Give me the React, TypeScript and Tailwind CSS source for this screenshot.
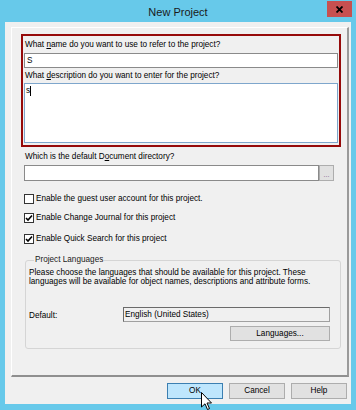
import React from 'react';

const CheckRow = ({ label, checked }: { label: string; checked: boolean }) => (
  <div className="flex items-center h-[10px]">
    <div className="w-[10px] h-[10px] border border-[#333333] bg-white flex items-center justify-center">
      {checked && (
        <svg width="8" height="8" viewBox="0 0 8 8">
          <path d="M1 4 L3 6 L7 1.5" fill="none" stroke="#000" strokeWidth="1.6" />
        </svg>
      )}
    </div>
    <span className="ml-[2px]">{label}</span>
  </div>
);

const Btn = ({ children, primary, className = '' }: { children: React.ReactNode; primary?: boolean; className?: string }) => (
  <div
    className={`flex items-center justify-center border ${
      primary ? 'bg-[#bee6fd] border-[#3c7fb1]' : 'bg-[#e1e1e1] border-[#adadad]'
    } ${className}`}
  >
    {children}
  </div>
);

export default function App() {
  return (
    <div className="relative w-[356px] h-[410px] overflow-hidden bg-[#67c9ea] flex flex-col font-['Liberation_Sans',Arial,sans-serif] text-[8.2px] leading-[10px] text-black">
      {/* Title bar */}
      <div className="relative h-[22px] flex items-center justify-center pt-[2px]">
        <span className="text-[11px] leading-[14px] text-[#1a1a1a]">New Project</span>
        <div className="absolute right-[4px] top-[1px] w-[25px] h-[16px] bg-[#c75050] flex items-center justify-center">
          <svg width="7" height="7" viewBox="0 0 7 7">
            <path d="M0.5 0.5 L6.5 6.5 M6.5 0.5 L0.5 6.5" stroke="#000" strokeWidth="1.8" />
          </svg>
        </div>
      </div>

      {/* Client area */}
      <div className="mx-[5px] w-[346px] h-[382px] bg-[#f0f0f0] pl-[6px] pr-[2px] pt-[5px] flex flex-col">
        {/* Page */}
        <div className="w-[338px] h-[350px] border-t border-l border-t-white border-l-white border-r-2 border-b-2 border-r-[#9a9a9a] border-b-[#8f8f8f] pl-[9px] pt-[6px] flex flex-col">
          {/* Highlighted required fields */}
          <div className="w-[320px] border-2 border-[#960a0a] px-[1px] pb-[2px] flex flex-col">
            <div className="mt-[4px] pl-[1px]">
              What <u>n</u>ame do you want to use to refer to the project?
            </div>
            <div className="mt-[3px] h-[15px] bg-white border border-[#8a8a8a] pl-[2px] flex items-center">S</div>
            <div className="mt-[3px] pl-[1px]">
              What <u>d</u>escription do you want to enter for the project?
            </div>
            <div className="mt-[2px] h-[60px] bg-white border border-[#7ea6cc] pl-[1px] pt-[2px] flex items-start">
              <span>s</span>
              <span className="w-px h-[10px] bg-black" />
            </div>
          </div>

          <div className="pl-[3px] flex flex-col">
            <div className="mt-[5px] pl-[1px]">
              Which is the default D<u>o</u>cument directory?
            </div>
            <div className="mt-[3px] flex">
              <div className="w-[295px] h-[16px] bg-white border border-[#8a8a8a]" />
              <div className="w-[15px] h-[16px] bg-[#e1e1e1] border border-[#adadad] flex items-center justify-center text-[7px] text-[#7a5a8a] leading-[8px] pt-[3px]">
                ...
              </div>
            </div>

            <div className="mt-[13px]">
              <CheckRow label="Enable the guest user account for this project." checked={false} />
            </div>
            <div className="mt-[9px]">
              <CheckRow label="Enable Change Journal for this project" checked />
            </div>
            <div className="mt-[11px]">
              <CheckRow label="Enable Quick Search for this project" checked />
            </div>

            <fieldset className="mt-[11px] ml-[1px] w-[316px] border border-[#d5d5d5] rounded-[3px] pl-[3px] pr-[10px] pb-[7px]">
              <legend className="ml-[5px] px-[1px] leading-[10px] text-[#1a1a1a]">Project Languages</legend>
              <div className="mt-[3px] leading-[9px]">
                Please choose the languages that should be available for this project. These
                <br />
                languages will be available for object names, descriptions and attribute forms.
              </div>
              <div className="mt-[21px] flex items-center">
                <div className="w-[94px] pt-[2px]">Default:</div>
                <div className="flex-1 h-[15px] border border-[#a0a0a0] border-t-[#6a6a6a] border-l-[#6a6a6a] bg-[#f0f0f0] pl-[1px] flex items-center">
                  English (United States)
                </div>
              </div>
              <div className="mt-[4px] flex justify-end">
                <Btn className="w-[100px] h-[15px]">Languages...</Btn>
              </div>
            </fieldset>
          </div>
        </div>

        {/* Dialog buttons */}
        <div className="mt-[6px] mr-[2px] flex justify-end gap-[6px]">
          <Btn primary className="w-[56px] h-[16px]">OK</Btn>
          <Btn className="w-[56px] h-[16px]">Cancel</Btn>
          <Btn className="w-[56px] h-[16px]">Help</Btn>
        </div>
      </div>

      {/* Mouse pointer */}
      <svg className="absolute left-[201px] top-[392px]" width="12" height="19" viewBox="0 0 12 19">
        <path d="M0.5 0.5 L0.5 15 L4 11.8 L6.5 17.5 L8.5 16.6 L6 11 L10.5 11 Z" fill="#fff" stroke="#000" strokeWidth="1" />
      </svg>
    </div>
  );
}
